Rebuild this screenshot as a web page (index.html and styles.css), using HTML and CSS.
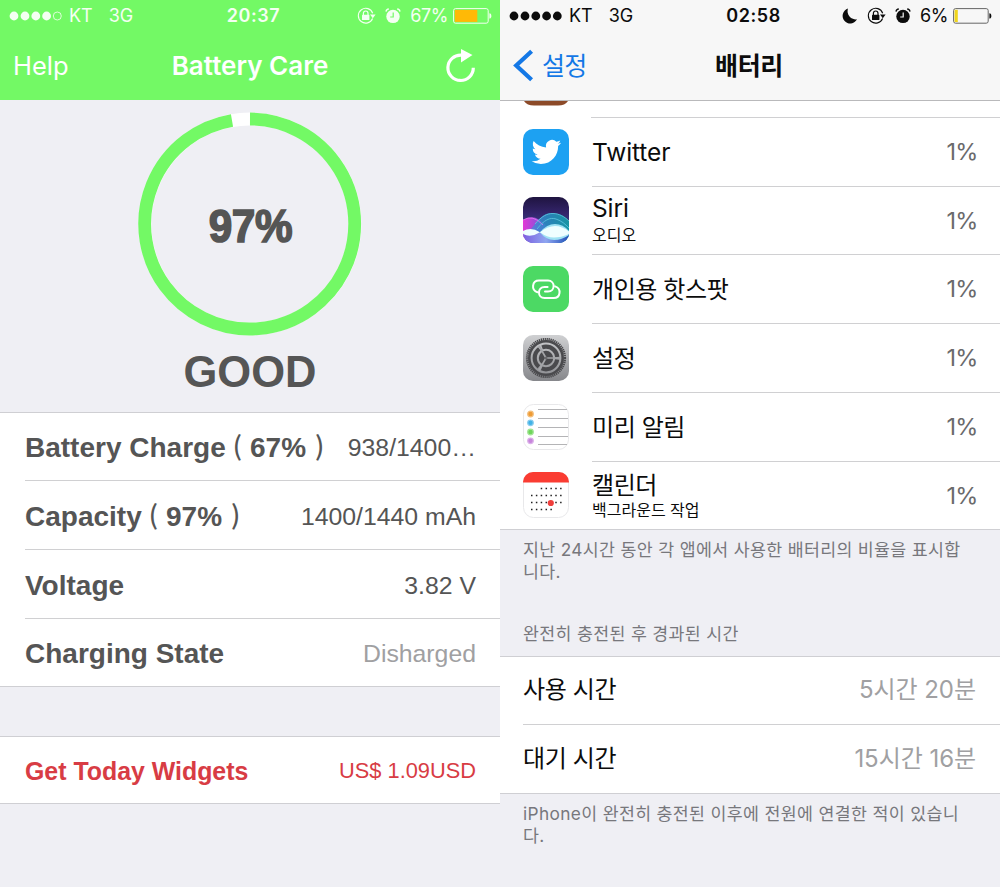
FILE: index.html
```html
<!DOCTYPE html>
<html lang="ko">
<head>
<meta charset="utf-8">
<title>Battery</title>
<link rel="stylesheet" href="styles.css">
</head>
<body>
<div class="screens">
  <section class="phone care">
    <header class="care-head">
      <div class="status">
        <div class="status-left">
          <svg class="dots" width="54" height="10" viewBox="0 0 54 10"><g fill="currentColor"><circle cx="5" cy="5" r="4.4"/><circle cx="16" cy="5" r="4.4"/><circle cx="26.8" cy="5" r="4.4"/><circle cx="37.6" cy="5" r="4.4"/></g><circle cx="48.3" cy="5" r="4" fill="none" stroke="currentColor" stroke-width=".8"/></svg>
          <span class="carrier">KT</span><span class="net">3G</span>
        </div>
        <span class="clock">20:37</span>
        <div class="status-right">
          <svg class="lock" width="19" height="18" viewBox="0 0 19 18"><path d="M15.6 11.5A7.4 7.4 0 1 1 15.7 6.2" fill="none" stroke="currentColor" stroke-width="1.1"/><path d="M13 7.6h5.6l-2.8 3.6z" fill="currentColor"/><rect x="5" y="7.8" width="7.4" height="5.2" rx=".6" fill="currentColor"/><path d="M6.4 8V6.3a2.3 2.3 0 0 1 4.600 0V8" fill="none" stroke="currentColor" stroke-width="1.2"/></svg>
          <svg class="alarm" width="16" height="16" viewBox="0 0 16 16"><circle cx="8" cy="8.400" r="6.700" fill="currentColor"/><path d="M1 3.600A3 3 0 0 1 3.800 1M15 3.600A3 3 0 0 0 12.200 1" stroke="currentColor" stroke-width="1.300" fill="none"/><path d="M8.200 4.600V9H5.200" stroke="#73f965" stroke-width="1.200" fill="none"/></svg>
          <span class="pct">67%</span>
          <svg class="batt" width="39" height="16" viewBox="0 0 39 16"><rect x=".6" y=".6" width="34.6" height="14.6" rx="2" fill="none" stroke="currentColor" stroke-width="1"/><rect x="1.8" y="1.9" width="22.500" height="12" fill="#ffb906"/><path d="M36.4 5.2c2.6 0 2.6 5.4 0 5.4z" fill="currentColor"/></svg>
        </div>
      </div>
      <div class="nav">
        <span class="help">Help</span>
        <span class="title">Battery Care</span>
        <svg class="reload" width="30" height="34" viewBox="0 0 30 34"><path d="M15.4 6.1A12.7 12.7 0 1 0 27.3 18.7" fill="none" stroke="#fff" stroke-width="3.2"/><path d="M15 0L26.5 6 15 13.6z" fill="#fff"/></svg>
      </div>
    </header>
    <div class="gauge">
      <div class="ring">
        <svg width="224" height="224" viewBox="0 0 224 224"><circle cx="112" cy="112" r="105" fill="none" stroke="#fff" stroke-width="12.8"/><path d="M112 7A105 105 0 1 1 94 8.5" fill="none" stroke="#73f965" stroke-width="12.8"/></svg>
        <span class="ring-value">97%</span>
      </div>
      <div class="verdict">GOOD</div>
    </div>
    <div class="list">
      <div class="row r68"><b>Battery Charge<i class="open">(</i>67%<i class="close">)</i></b><span>938/1400…</span></div>
      <div class="row"><b>Capacity<i class="open">(</i>97%<i class="close">)</i></b><span>1400/1440 mAh</span></div>
      <div class="row"><b>Voltage</b><span>3.82 V</span></div>
      <div class="row last"><b>Charging State</b><span class="dim">Disharged</span></div>
    </div>
    <div class="list promo">
      <div class="row last"><b>Get Today Widgets</b><span>US$ 1.09USD</span></div>
    </div>
  </section>

  <section class="phone settings">
    <header class="set-head">
      <div class="status">
        <div class="status-left">
          <svg class="dots" width="54" height="10" viewBox="0 0 54 10"><g fill="currentColor"><circle cx="5" cy="5" r="4.4"/><circle cx="16" cy="5" r="4.4"/><circle cx="26.8" cy="5" r="4.4"/><circle cx="37.6" cy="5" r="4.4"/><circle cx="48.3" cy="5" r="4.4"/></g></svg>
          <span class="carrier">KT</span><span class="net">3G</span>
        </div>
        <span class="clock">02:58</span>
        <div class="status-right">
          <svg class="moon" width="16" height="16" viewBox="0 0 16 16"><path d="M6 .6A7.6 7.6 0 1 0 15 11.3 8.2 8.2 0 0 1 6 .6z" fill="currentColor"/></svg>
          <svg class="lock" width="19" height="18" viewBox="0 0 19 18"><path d="M15.6 11.5A7.4 7.4 0 1 1 15.7 6.2" fill="none" stroke="currentColor" stroke-width="1.1"/><path d="M13 7.6h5.6l-2.8 3.6z" fill="currentColor"/><rect x="5" y="7.8" width="7.4" height="5.2" rx=".6" fill="currentColor"/><path d="M6.4 8V6.3a2.3 2.3 0 0 1 4.600 0V8" fill="none" stroke="currentColor" stroke-width="1.2"/></svg>
          <svg class="alarm" width="16" height="16" viewBox="0 0 16 16"><circle cx="8" cy="8.400" r="6.700" fill="currentColor"/><path d="M1 3.600A3 3 0 0 1 3.800 1M15 3.600A3 3 0 0 0 12.200 1" stroke="currentColor" stroke-width="1.300" fill="none"/><path d="M8.200 4.600V9H5.200" stroke="#f7f7f7" stroke-width="1.200" fill="none"/></svg>
          <span class="pct">6%</span>
          <svg class="batt" width="39" height="16" viewBox="0 0 39 16"><rect x=".6" y=".6" width="34.6" height="14.6" rx="2" fill="none" stroke="#666" stroke-width="1"/><rect x="1.6" y="1.8" width="3.2" height="12.2" fill="#f0d51c"/><path d="M36.4 5.2c2.6 0 2.6 5.4 0 5.4z" fill="currentColor"/></svg>
        </div>
      </div>
      <div class="nav">
        <span class="back"><svg width="22" height="34" viewBox="0 0 22 34"><path d="M18.6 2.2L3.200 16.500l15.400 14.300" fill="none" stroke="#1478e6" stroke-width="4.200"/></svg><span>설정</span></span>
        <span class="title">배터리</span>
        <span></span>
      </div>
    </header>

    <div class="apps">
      <div class="peek"><svg width="46" height="5" viewBox="0 0 46 5"><path d="M1 0Q4 4.6 11 4.6H35Q42 4.6 45 0z" fill="#8c4a28"/></svg></div>
      <div class="app">
        <svg class="icon" viewBox="0 0 46 46"><rect width="46" height="46" rx="10" fill="#1da1f2"/><path transform="translate(8.6 8.2) scale(1.23)" d="M23.95 4.57a10 10 0 0 1-2.82.77 4.96 4.96 0 0 0 2.16-2.72c-.95.55-2 .95-3.13 1.18a4.92 4.92 0 0 0-8.38 4.48C7.69 8.1 4.07 6.13 1.64 3.16a4.92 4.92 0 0 0 1.52 6.57 4.9 4.9 0 0 1-2.23-.61v.06a4.92 4.92 0 0 0 3.95 4.83 5 5 0 0 1-2.21.08 4.94 4.94 0 0 0 4.6 3.42A9.87 9.87 0 0 1 0 19.54a14 14 0 0 0 7.55 2.21c9.05 0 14-7.5 14-13.98 0-.21 0-.42-.02-.63a9.94 9.94 0 0 0 2.46-2.55z" fill="#fff"/></svg>
        <div class="body"><div class="name latin">Twitter</div><span class="val">1%</span></div>
      </div>
      <div class="app h68">
        <svg class="icon" viewBox="0 0 46 46">
          <defs>
            <clipPath id="sc"><rect width="46" height="46" rx="10"/></clipPath>
            <linearGradient id="sg" x1="0" y1="0" x2="0" y2="1"><stop offset="0" stop-color="#1f1440"/><stop offset=".35" stop-color="#33246a"/><stop offset="1" stop-color="#3f66ad"/></linearGradient>
            <linearGradient id="sp" x1="0" y1="0" x2="1" y2="0"><stop offset="0" stop-color="#e23ad6"/><stop offset=".35" stop-color="#8a50d8"/><stop offset="1" stop-color="#3a3fa8"/></linearGradient>
            <linearGradient id="st" x1="0" y1="0" x2="1" y2="0"><stop offset="0" stop-color="#6a78e8"/><stop offset=".5" stop-color="#2a8fc6"/><stop offset="1" stop-color="#12a5a8"/></linearGradient>
            <linearGradient id="sb" x1="0" y1="0" x2="1" y2="0"><stop offset="0" stop-color="#7c5fe0"/><stop offset=".5" stop-color="#8fa6f0"/><stop offset="1" stop-color="#1f4fb8"/></linearGradient>
          </defs>
          <g clip-path="url(#sc)">
            <rect width="46" height="46" fill="url(#sg)"/>
            <path d="M0 23Q12 15 24 30T46 42V46H0z" fill="url(#sp)"/>
            <path d="M8 32C17 21 20 16 29 16S42 20 46 24V46H0z" fill="url(#st)" opacity=".85"/>
            <path d="M0 23Q10 17 20 28" stroke="#e67af4" stroke-width=".8" fill="none"/>
            <path d="M12 27C19 19 24 16.500 30 16.500S42 20 46 24M14 32C21 23 27 20 33 22S42 27 46 31" stroke="#5fc8e0" fill="none" stroke-width=".8"/>
            <path d="M0 37Q10 37 17 35T46 37V46H0z" fill="url(#sb)"/>
            <path d="M17 35.200Q24 27 32 27T46 34V38Q39 43 31 43T17 35.600z" fill="#9fe2f4"/>
            <path d="M0 34Q8 29.500 17 35.200Q8 41 0 37zM17 35.200Q25 29 32 29T46 34.500V37Q38 40.500 31 40.500T17 35.200z" fill="#effeff"/>
          </g>
        </svg>
        <div class="body"><div class="name two"><span class="latin">Siri</span><small>오디오</small></div><span class="val">1%</span></div>
      </div>
      <div class="app">
        <svg class="icon" viewBox="0 0 46 46"><rect width="46" height="46" rx="10" fill="#4cd964"/><g fill="none" stroke="#fff" stroke-width="2" stroke-linecap="round"><path id="lk" d="M14.500 26.200C7.800 24 9 14.600 16 14.600H25C32.500 14.600 32.500 25.600 25 25.600H22"/><use href="#lk" transform="rotate(180 23.300 23.300)"/></g></svg>
        <div class="body"><div class="name">개인용 핫스팟</div><span class="val">1%</span></div>
      </div>
      <div class="app">
        <svg class="icon" viewBox="0 0 46 46">
          <defs><linearGradient id="gg" x1="0" y1="0" x2="0" y2="1"><stop offset="0" stop-color="#cfd0d2"/><stop offset="1" stop-color="#86878b"/></linearGradient></defs>
          <rect width="46" height="46" rx="10" fill="url(#gg)"/>
          <circle cx="23" cy="23" r="18.900" fill="none" stroke="#4a4a4d" stroke-width="2.400" stroke-dasharray="1.300 .68"/>
          <circle cx="23" cy="23" r="16.700" fill="none" stroke="#4a4a4d" stroke-width="2.600"/>
          <circle cx="23" cy="23" r="11.300" fill="none" stroke="#4a4a4d" stroke-width="4.200" stroke-dasharray="20.500 3.167" stroke-dashoffset="-1.600"/>
          <circle cx="23" cy="23" r="7.200" fill="#4a4a4d"/>
          <path d="M23 23H37M23 23L16 10.900M23 23L16 35.100" stroke="#a4a5a8" stroke-width="1.700"/>
          <circle cx="23" cy="23" r="1.500" fill="#6a6a6d"/>
        </svg>
        <div class="body"><div class="name">설정</div><span class="val">1%</span></div>
      </div>
      <div class="app">
        <svg class="icon" viewBox="0 0 46 46"><rect x=".5" y=".5" width="45" height="45" rx="10" fill="#fff" stroke="#e8e8ea"/><path d="M15 5.500H44M15 14.500H45M15 23.500H45M15 32.500H45M15 40.500H44" stroke="#b4b4b6"/><g stroke-width="1.200"><circle cx="7.500" cy="10" r="2.800" fill="#ee9b35" stroke="#f3bf7c"/><circle cx="7.500" cy="18.800" r="2.800" fill="#41b2e6" stroke="#8bcdee"/><circle cx="7.500" cy="28" r="2.800" fill="#6fd65b" stroke="#a4e597"/><circle cx="7.500" cy="36.800" r="2.800" fill="#c785dc" stroke="#dcb2e9"/></g></svg>
        <div class="body"><div class="name">미리 알림</div><span class="val">1%</span></div>
      </div>
      <div class="app h68 last">
        <svg class="icon" viewBox="0 0 46 46"><rect x=".5" y=".5" width="45" height="45" rx="10" fill="#fff" stroke="#e8e8ea"/><path d="M0 10.500V10A10 10 0 0 1 10 0H36A10 10 0 0 1 46 10V10.500z" fill="#fa3c32"/><g stroke="#222" stroke-width="1.500" stroke-dasharray="1.500 3.350"><path d="M17.700 16.500H39M8 23.500H39M8 30.500H39M8 37.600H29.500"/></g><circle cx="27.800" cy="31" r="3.100" fill="#ef3e3b"/></svg>
        <div class="body"><div class="name two"><span>캘린더</span><small>백그라운드 작업</small></div><span class="val">1%</span></div>
      </div>
    </div>

    <p class="note first">지난 24시간 동안 각 앱에서 사용한 배터리의 비율을 표시합<br>니다.</p>
    <p class="note heading">완전히 충전된 후 경과된 시간</p>
    <div class="times">
      <div class="time"><span>사용 시간</span><span class="dim">5시간 20분</span></div>
      <div class="time last"><span>대기 시간</span><span class="dim">15시간 16분</span></div>
    </div>
    <p class="note">iPhone이 완전히 충전된 이후에 전원에 연결한 적이 있습니<br>다.</p>
  </section>
</div>
</body>
</html>
```
FILE: styles.css
```css
* { box-sizing: border-box; }
body { margin: 0; width: 1000px; height: 887px; overflow: hidden; background: #efeff4; }
svg { display: block; flex: none; }
.screens { display: grid; grid-template-columns: 500px 500px; height: 887px; }
.phone { height: 887px; overflow: hidden; background: #efeff4; }
.care { font-family: "Liberation Sans", Arial, sans-serif; color: #555; }
.settings { font-family: Inter, "Noto Sans CJK KR", sans-serif; color: #0c0c0c; }

.care-head { height: 100px; background: #73f965; color: #f4fff2; }
.set-head { height: 101px; background: #f7f7f7; border-bottom: 1px solid #b9b9bb; color: #0c0c0c; }

.status { display: grid; grid-template-columns: 1fr auto 1fr; align-items: center; height: 32px; padding: 0 8px 0 9px; font: 400 18px/32px Inter, sans-serif; }
.status-left, .status-right { display: flex; align-items: center; }
.status-right { justify-content: flex-end; }
.carrier { margin-left: 6px; }
.net { margin-left: 16px; }
.clock { font-weight: 600; letter-spacing: 0.6px; padding-left: 6px; }
.moon { margin-right: 9px; }
.alarm { margin-left: 9px; }
.pct { margin-left: 9px; letter-spacing: -0.4px; }
.batt { margin-left: 5px; }

.nav { display: grid; grid-template-columns: 1fr auto 1fr; align-items: center; height: 68px; padding: 0 24px 0 13px; }
.care .nav { font: 400 25.5px/68px Inter, sans-serif; color: #fff; }
.care .title { font-weight: 600; padding-left: 11px; font-size: 26px; }
.reload { justify-self: end; }
.back { display: flex; align-items: center; gap: 7px; color: #1478e6; font: 400 25px/64px "Noto Sans CJK KR", sans-serif; letter-spacing: -0.8px; }
.back span { margin-top: -4px; }
.settings .title { font: 700 25px/66px "Noto Sans CJK KR", sans-serif; letter-spacing: -0.4px; padding-left: 9px; margin-top: -4px; }

.gauge { height: 312px; padding-top: 12px; display: flex; flex-direction: column; align-items: center; }
.ring { display: grid; place-items: center; }
.ring > * { grid-area: 1 / 1; }
.ring-value { font-size: 46px; font-weight: 700; line-height: 1; letter-spacing: -0.4px; -webkit-text-stroke: 1.6px #555; padding-top: 3px; transform: scaleX(.92); }
.verdict { margin-top: 11px; font-size: 43.5px; line-height: 50px; font-weight: 700; }

.list { background: #fff; border-top: 1px solid #cfcfd3; border-bottom: 1px solid #cfcfd3; padding-left: 25px; }
.row { display: flex; justify-content: space-between; align-items: center; height: 69px; padding: 3px 24px 0 0; border-bottom: 1px solid #d0d0d2; font-size: 24.8px; white-space: nowrap; }
.row b { font-size: 28px; line-height: 32px; }
.row i { font: 500 26px/1 "Noto Sans CJK KR", sans-serif; }
.open { margin: 0 8px 0 7px; }
.close { margin-left: 9px; }
.r68 { height: 68px; }
.row.last { height: 67px; border-bottom: 0; }
.dim { color: #a0a0a2; }
.promo { margin-top: 49px; color: #d83c44; }
.promo .row.last { height: 66px; font-size: 21.8px; padding-top: 2px; }
.promo b { font-size: 24.9px; }

.peek { height: 17px; padding-left: 23px; border-bottom: 1px solid #d0d0d2; border-image: linear-gradient(90deg, #fff 92px, #d0d0d2 92px) 1; }
.apps { background: #fff; border-bottom: 1px solid #cfcfd3; }
.app { display: flex; align-items: center; height: 69px; padding-left: 23px; gap: 23px; }
.app.h68 { height: 68px; }
.app.h68.last { height: 67px; }
.icon { width: 46px; height: 46px; margin-bottom: 2px; }
.body { flex: 1; height: 100%; display: flex; align-items: center; justify-content: space-between; padding-right: 24px; border-bottom: 1px solid #d0d0d2; }
.app.last .body { border-bottom: 0; }
.name { font: 400 24px/30px "Noto Sans CJK KR", sans-serif; letter-spacing: -0.4px; margin-top: -3px; }
.latin { font: 400 24.5px/30px Inter, sans-serif; letter-spacing: -0.1px; margin-top: 0; }
.two { display: flex; flex-direction: column; margin-top: 0; }
.two span { line-height: 27px; }
.two small { font-size: 16px; line-height: 24px; letter-spacing: 0; }
.val { font: 400 23.5px/30px Inter, sans-serif; letter-spacing: -0.8px; margin-right: -1.5px; color: #6a6a6c; }

.note { margin: 0; padding: 9px 0 0 23px; font-size: 17.3px; line-height: 22px; letter-spacing: 0.35px; color: #77777c; white-space: nowrap; }
.note.first { height: 84px; }
.note.heading { height: 42px; }
.times { background: #fff; border-top: 1px solid #cfcfd3; border-bottom: 1px solid #cfcfd3; padding-left: 23px; }
.time { display: flex; align-items: center; justify-content: space-between; height: 68px; padding: 0 24px 6px 0; border-bottom: 1px solid #d0d0d2; font-size: 24px; letter-spacing: -0.4px; }
.time .dim { letter-spacing: -0.05px; }
.time.last { border-bottom: 0; }
```
